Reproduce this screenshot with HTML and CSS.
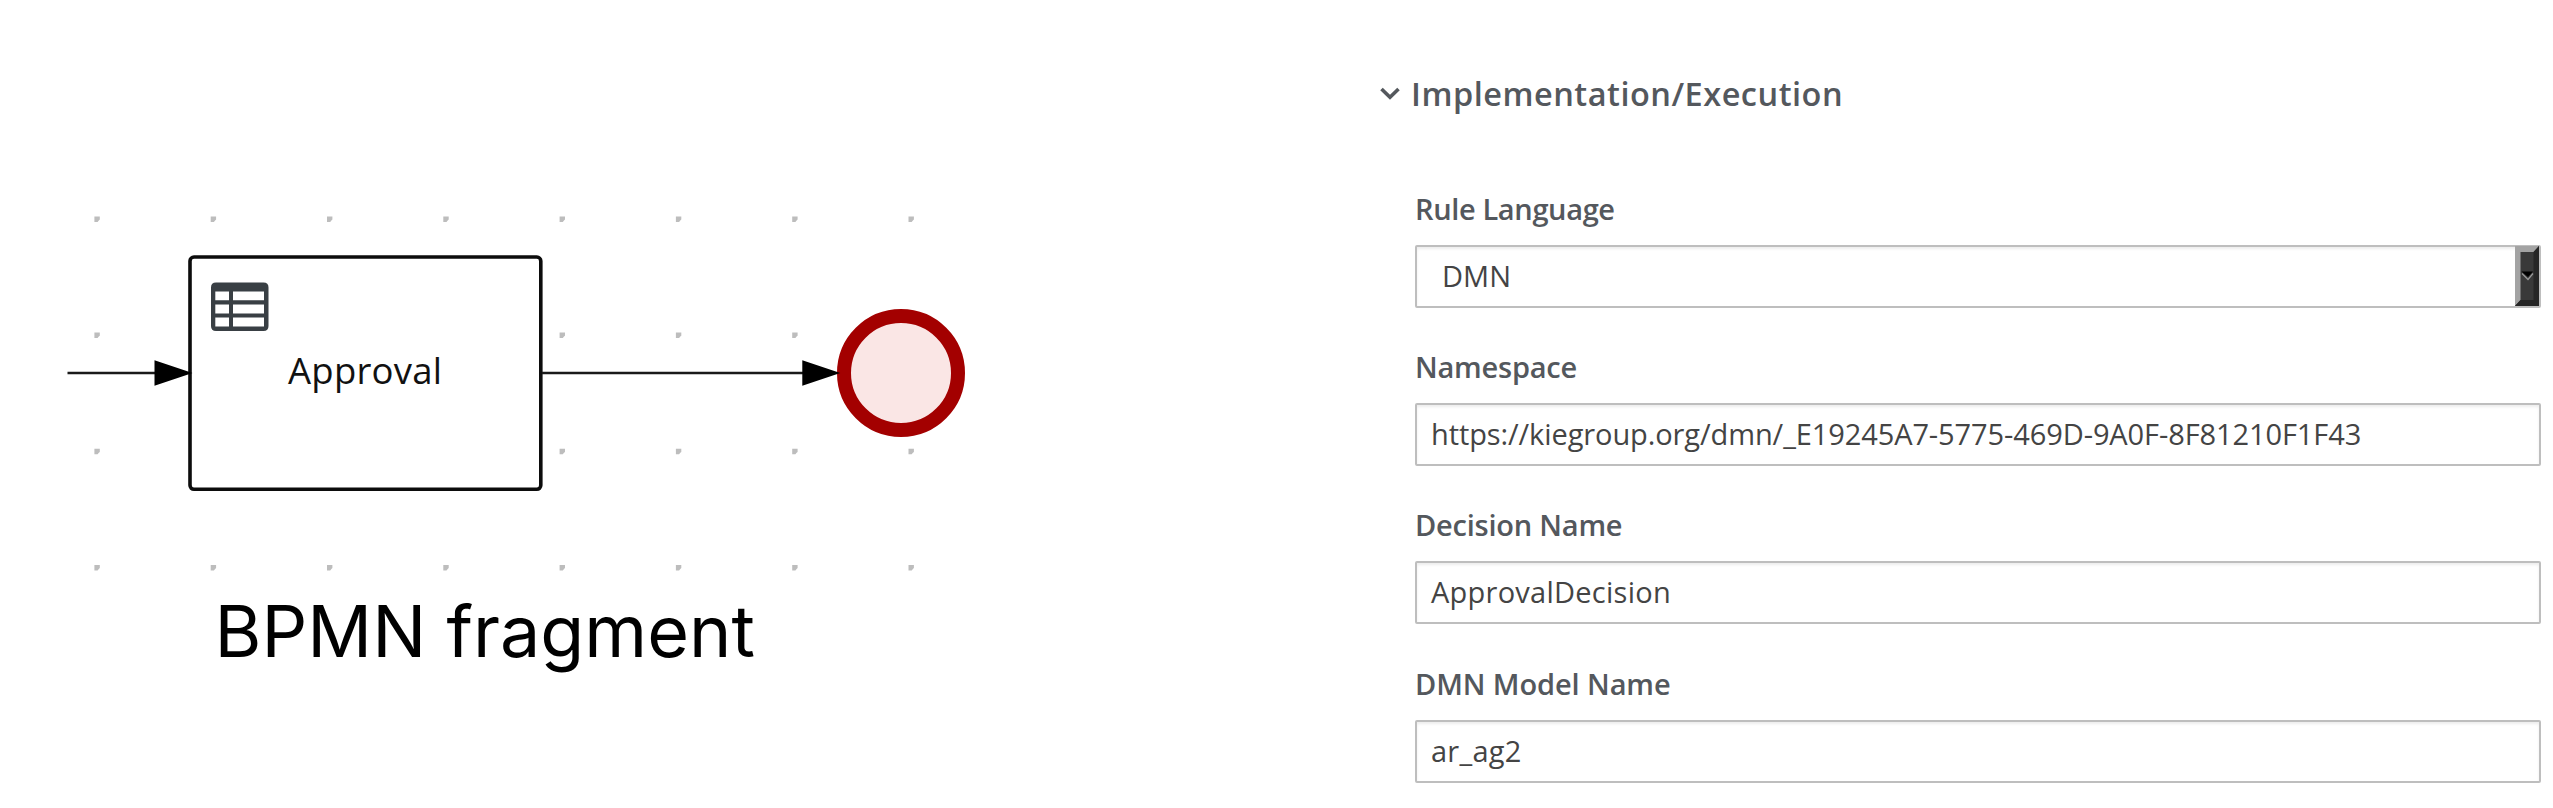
FILE: index.html
```html
<!DOCTYPE html>
<html lang="en">
<head>
<meta charset="utf-8">
<title>BPMN fragment</title>
<link rel="stylesheet" href="styles.css">
</head>
<body>
<main class="page">
  <section class="diagram">
    <svg class="canvas" width="1360" height="808" viewBox="0 0 1360 808">
      <defs>
        <path id="dot" d="M0 .2H5.4V3.4L4.4 4.3L3.2 5.7H0Z"/>
        <g id="dotrow">
          <use href="#dot" x="94.4"/><use href="#dot" x="210.7"/><use href="#dot" x="327"/><use href="#dot" x="443.3"/>
          <use href="#dot" x="559.6"/><use href="#dot" x="675.9"/><use href="#dot" x="792.2"/><use href="#dot" x="908.5"/>
        </g>
      </defs>
      <g class="dots">
        <use href="#dotrow" y="216.2"/><use href="#dotrow" y="332.3"/><use href="#dotrow" y="448.5"/><use href="#dotrow" y="564.7"/>
      </g>
      <rect class="task" x="190" y="257" width="350.8" height="232.3" rx="4"/>
      <circle class="end" cx="901" cy="373" r="57"/>
      <path class="flow" d="M67.5 373H160M542 373H806"/>
      <path class="head" d="M154.5 360.3L192.5 373L154.5 385.8ZM802.3 360.3L840.3 373L802.3 385.8Z"/>
      <path class="table" fill-rule="evenodd" d="M216 282.4H263.5Q268.5 282.4 268.5 287.4V326Q268.5 331 263.5 331H216Q211 331 211 326V287.4Q211 282.4 216 282.4ZM215.3 291.4V300.2H229V291.4ZM233 291.4V300.2H264V291.4ZM215.3 304.4V313.4H229V304.4ZM233 304.4V313.4H264V304.4ZM215.3 317.6V326.5H229V317.6ZM233 317.6V326.5H264V317.6Z"/>
      <text class="task-name" x="288" y="383.8" textLength="154">Approval</text>
      <text class="caption" x="214.5" y="656.7" textLength="540.5" lengthAdjust="spacingAndGlyphs">BPMN fragment</text>
    </svg>
  </section>
  <section class="panel">
    <h2 class="heading">
      <svg class="chevron" width="20" height="14" viewBox="0 0 20 14"><path d="M1.5 2L10 10.3L18.5 2"/></svg>
      <span>Implementation/Execution</span>
    </h2>
    <div class="fields">
      <div class="field"><div class="label rule">Rule Language</div><div class="control select"><span class="value">DMN</span>
        <svg class="drop" width="24" height="60" viewBox="0 0 24 60"><path fill="#393939" d="M0 0H24V60H0Z"/><path fill="#a3a3a3" d="M0 0H24L18.5 6H5.5V54L0 60Z"/><path fill="#262626" d="M24 0V60H0L5.5 54H18.5V6Z"/><path fill="#000" d="M6.5 25.5H18L13 31Z"/><path fill="none" stroke="#999" stroke-width="1.2" d="M7 27.5L13 33.5L18 27.5"/></svg></div></div>
      <div class="field"><div class="label">Namespace</div><div class="control"><span class="value uri">https://kiegroup.org/dmn/_E19245A7-5775-469D-9A0F-8F81210F1F43</span></div></div>
      <div class="field"><div class="label">Decision Name</div><div class="control"><span class="value name">ApprovalDecision</span></div></div>
      <div class="field"><div class="label model">DMN Model Name</div><div class="control"><span class="value name">ar_ag2</span></div></div>
    </div>
  </section>
</main>
</body>
</html>
```
FILE: styles.css
```css
* { box-sizing: border-box; }
body { margin: 0; background: #fff; font-family: "Open Sans", sans-serif; overflow: hidden; }
.page { display: grid; grid-template-columns: 1360px 1fr; height: 808px; }
.canvas { display: block; }
.dots { fill: #bdbdbd; }
.task { fill: #fff; stroke: #0c0c0c; stroke-width: 3.6; }
.end { fill: #fae6e5; stroke: #a30000; stroke-width: 14; }
.flow { fill: none; stroke: #1a1a1a; stroke-width: 2.3; }
.head { fill: #000; }
.table { fill: #393f44; }
.task-name { font-size: 36.5px; fill: #111; }
.caption { font-family: Inter, sans-serif; font-size: 71px; font-weight: 400; fill: #000; }
.panel { padding: 72px 12px 0 20px; color: #54585d; }
.heading { display: flex; align-items: center; gap: 11px; height: 44px; margin: 0; font-size: 32.5px; line-height: 44px; font-weight: 600; letter-spacing: .5px; white-space: nowrap; }
.chevron { fill: none; stroke: #54585d; stroke-width: 3.6; }
.fields { display: flex; flex-direction: column; gap: 47.4px; padding: 80.5px 0 0 35px; }
.field { display: flex; flex-direction: column; gap: 24px; height: 111px; }
.label { height: 24px; line-height: 24px; font-size: 29px; font-weight: 600; letter-spacing: -.22px; white-space: nowrap; }
.rule { letter-spacing: -.36px; }
.model { letter-spacing: -.1px; }
.control { display: flex; align-items: center; justify-content: space-between; height: 63px; padding-left: 14px; border: 2px solid #bebebe; border-radius: 2px; box-shadow: inset 0 2px 3px #00000013; color: #444; background: #fff; }
.select { padding-left: 25px; }
.value { padding-bottom: 1px; font-size: 29px; line-height: 40px; white-space: nowrap; }
.uri { letter-spacing: -.1px; }
.name { letter-spacing: .25px; }
.drop { display: block; }
```
